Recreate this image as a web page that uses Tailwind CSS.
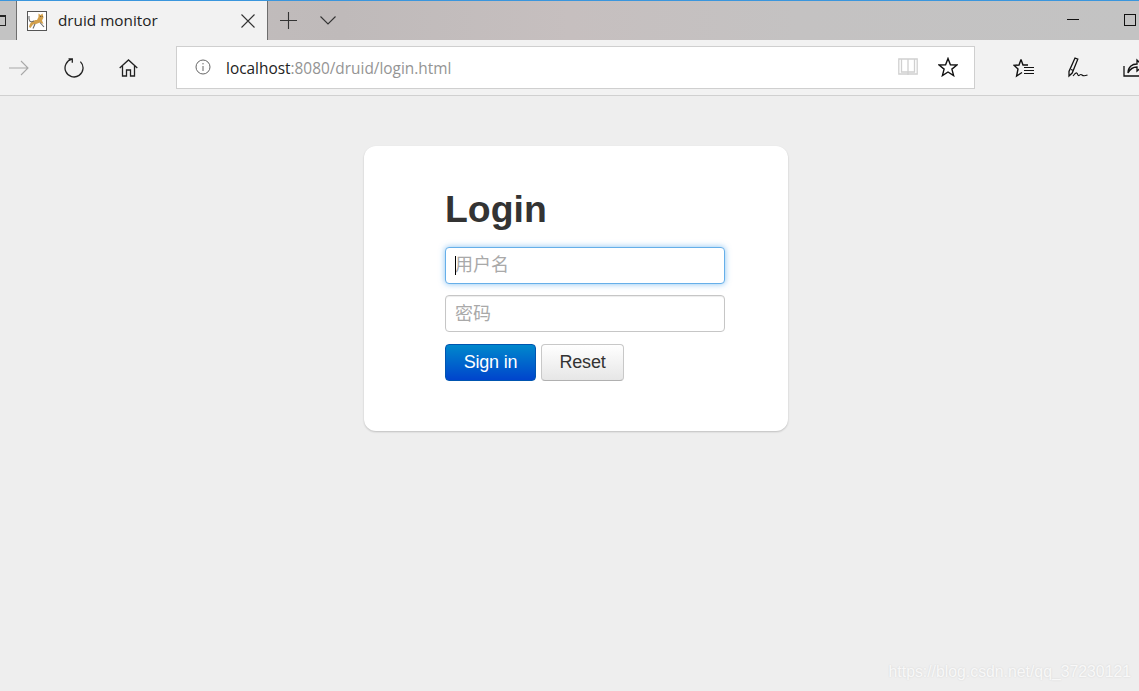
<!DOCTYPE html>
<html lang="zh">
<head>
    <meta charset="UTF-8">
    <title>druid monitor</title>
    <script src="https://cdn.jsdelivr.net/npm/@tailwindcss/browser@4"></script>
</head>
<body class="bg-[#eeeeee] font-['Liberation_Sans',sans-serif] h-[691px] w-[1139px] overflow-hidden relative">
    <!-- tab strip -->
    <div class="h-10 border-t border-[#3a96dd] flex bg-[linear-gradient(90deg,#c4c0c0_0%,#bfbaba_30%,#c6bfbf_50%,#c4c2c2_70%,#c3c3c3_100%)]">
        <div class="w-4 shrink-0 bg-[#c3c3c3] flex items-center">
            <div class="w-[6px] h-[11px] border border-l-0 border-t-2 border-[#222]"></div>
        </div>
        <div class="w-[252px] shrink-0 bg-[#f2f2f2] border-x border-[#6e6e6e] flex items-center pl-[10px]">
            <svg width="20" height="20" viewBox="0 0 20 20" class="shrink-0">
                <rect x="0.5" y="0.5" width="19" height="19" fill="#fff" stroke="#555"/>
                <path d="M2 16 C3 11 6 9 10 9 L11.5 6 L11.5 2.5 L13.5 4 L15.5 2.5 L16.5 6.5 L15 9.5 L16.5 13 L13 11.5 L9 13 L6 13.5 L3.5 17 Z" fill="#d3a04a"/>
                <path d="M2 5 C1.5 10 3 12 7 10 M8 13 L6 17.5 M13 11.5 L17 16" fill="none" stroke="#6b6b6b" stroke-width="1.1"/>
                <path d="M13 5.5 h0.8 M14.8 5.5 h0.8" stroke="#333" stroke-width="0.8"/>
            </svg>
            <span class="ml-[11px] text-[15.3px] text-[#222] font-['Open_Sans',sans-serif] whitespace-nowrap">druid monitor</span>
            <svg width="14" height="14" viewBox="0 0 14 14" class="ml-auto mr-3 shrink-0 text-[#333]">
                <path d="M0.5 0.5 L13.5 13.5 M13.5 0.5 L0.5 13.5" stroke="currentColor" stroke-width="1.1"/>
            </svg>
        </div>
        <div class="flex items-center pl-[12px] gap-[23px]">
            <svg width="17" height="17" viewBox="0 0 17 17"><path d="M8.5 0 V17 M0 8.5 H17" stroke="#333" stroke-width="1.1"/></svg>
            <svg width="16" height="9" viewBox="0 0 16 9"><path d="M0.5 0.5 L8 8 L15.5 0.5" fill="none" stroke="#333" stroke-width="1.1"/></svg>
        </div>
        <div class="ml-auto flex items-center mb-[2px] mr-[3px]">
            <div class="w-3 h-px bg-[#111] mr-[45px]"></div>
            <div class="w-3 h-3 border border-[#111]"></div>
        </div>
    </div>

    <!-- toolbar -->
    <div class="h-[56px] bg-[#f2f2f2] border-b border-[#d0d0d0] flex items-center relative">
        <div class="flex items-center w-[176px] shrink-0 pl-[9px]">
            <svg width="20" height="16" viewBox="0 0 20 16" class="text-[#a8a8a8]">
                <path d="M0 8 H19 M12 1 L19 8 L12 15" fill="none" stroke="currentColor" stroke-width="1.1"/>
            </svg>
            <svg width="20" height="21" viewBox="0 0 20 21" class="ml-[35px]">
                <path d="M8 2.2 A9 9 0 1 0 16.4 4.6 M4.5 1.8 H8.3 V5.8" fill="none" stroke="#222" stroke-width="1.3"/>
            </svg>
            <svg width="19" height="18" viewBox="0 0 19 18" class="ml-[35px]">
                <path d="M0.7 9 L9.5 1 L18.3 9 M3.5 7 V17 H7.5 V11 H11.5 V17 H15.5 V7" fill="none" stroke="#222" stroke-width="1.3"/>
            </svg>
        </div>
        <div class="w-[799px] h-[43px] shrink-0 bg-white border border-[#cfcfcf] flex items-center pl-[18px] pr-[16px] mb-[1px]">
            <svg width="16" height="16" viewBox="0 0 16 16" class="shrink-0">
                <circle cx="8" cy="8" r="7" fill="none" stroke="#666" stroke-width="1"/>
                <path d="M8 7 V12 M8 4 V5.4" stroke="#666" stroke-width="1"/>
            </svg>
            <span class="ml-[15px] mt-[3px] text-[15.4px] font-['Open_Sans',sans-serif] text-[#222] whitespace-nowrap">localhost<span class="text-[#949494]">:8080/druid/login.html</span></span>
            <svg width="20" height="18" viewBox="0 0 20 18" class="ml-auto shrink-0">
                <path d="M0.8 1 H19.2 V16 H0.8 Z M10 1 V17 M3.5 1 V14 H10 M16.5 1 V14 H10" fill="none" stroke="#d0d0d0" stroke-width="1.3"/>
            </svg>
            <svg width="20" height="20" viewBox="0 0 20 20" class="ml-[20px] shrink-0">
                <path d="M10 1.5 L12.4 7.7 L19 8 L13.9 12.1 L15.6 18.6 L10 15 L4.4 18.6 L6.1 12.1 L1 8 L7.6 7.7 Z" fill="none" stroke="#111" stroke-width="1.4"/>
            </svg>
        </div>
        <svg width="22" height="20" viewBox="0 0 22 20" class="ml-[38px] shrink-0">
            <path d="M8 1.5 L10 7 L15 7 M8 1.5 L6 7 L1 7.3 L5 11 L3.6 18 L9 14.5" fill="none" stroke="#111" stroke-width="1.4"/>
            <path d="M11 9.5 H21 M11 12.5 H21 M11 15.5 H21" stroke="#111" stroke-width="1.2"/>
        </svg>
        <svg width="20" height="21" viewBox="0 0 20 21" class="ml-[33px] shrink-0">
            <path d="M7 1 L9.8 2.2 L4.2 16 L1 19 L1 14.5 Z M3 12.5 L5.5 13.5" fill="none" stroke="#111" stroke-width="1.3"/>
            <path d="M5 19 C8 15 9 15 10 18 C11 20 12 16 14 18 C15 19 17 19 19.5 18" fill="none" stroke="#111" stroke-width="1.1"/>
        </svg>
        <svg width="20" height="20" viewBox="0 0 20 20" class="ml-[35px] shrink-0">
            <path d="M1 8 V18 H17 V14 M5 15 C5 9 9 6 14 6 V2 L20 8 L14 13 V9 C10 9 7 11 5 15 Z" fill="none" stroke="#111" stroke-width="1.3"/>
        </svg>
    </div>

    <!-- login card -->
    <div class="pt-[50px] pl-[364px]">
        <form class="w-[424px] h-[285px] bg-white rounded-xl shadow-[0_1px_2px_rgba(0,0,0,0.2)] pl-[81px] pt-[39px]">
            <h2 class="text-[37.4px] leading-[48px] font-bold text-[#333333]">Login</h2>
            <div class="mt-[14px] relative w-[280px]">
                <input type="text" placeholder="用户名" class="block w-full h-[37px] px-[9px] text-[18px] font-['Liberation_Sans','Noto_Sans_CJK_SC',sans-serif] placeholder:text-[#a9a9a9] bg-white rounded-[4px] border border-[#66afe9] shadow-[0_0_6px_rgba(82,168,236,0.7)] outline-none">
                <div class="absolute left-[10px] top-[9px] w-px h-[19px] bg-black"></div>
            </div>
            <input type="password" placeholder="密码" class="block mt-[11px] w-[280px] h-[37px] px-[9px] pt-[2px] text-[18px] font-['Liberation_Sans','Noto_Sans_CJK_SC',sans-serif] placeholder:text-[#a9a9a9] bg-white rounded-[4px] border border-[#c6c6c6] shadow-[inset_0_1px_1px_rgba(0,0,0,0.075)] outline-none">
            <div class="mt-[12px] flex gap-[5px]">
                <button type="button" class="w-[91px] h-[37px] rounded-[4px] border border-[#0055b0] bg-[linear-gradient(180deg,#0088cc,#0044cc)] text-white text-[18px] tracking-[-0.2px]">Sign in</button>
                <button type="button" class="w-[83px] h-[37px] rounded-[4px] border border-[#c8c8c8] border-b-[#b0b0b0] bg-[linear-gradient(180deg,#ffffff,#e6e6e6)] text-[#333333] text-[18px] tracking-[-0.2px]">Reset</button>
            </div>
        </form>
    </div>

    <!-- watermark -->
    <div class="absolute right-[8px] bottom-[9px] text-[15.8px] leading-5 text-[#f8f8f8] [text-shadow:0_0_2px_rgba(0,0,0,0.12)] whitespace-nowrap">https://blog.csdn.net/qq_37230121</div>
</body>
</html>
